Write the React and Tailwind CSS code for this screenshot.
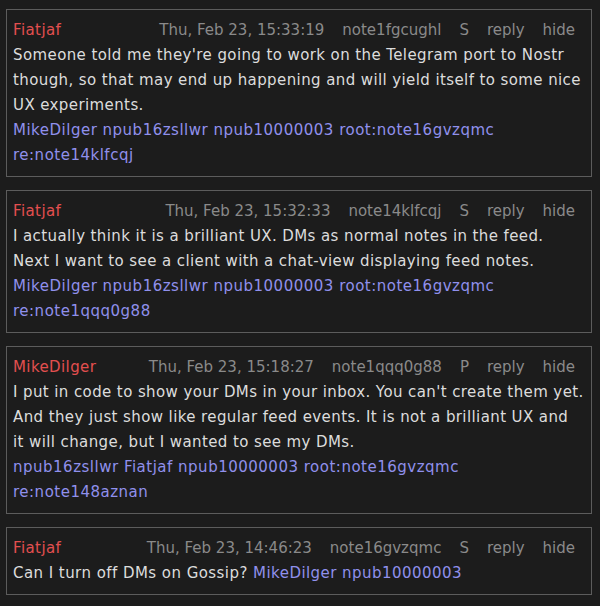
const FONT = { fontFamily: '"DejaVu Sans", "Liberation Sans", sans-serif' };

const notes = [
  {
    author: "Fiatjaf",
    when: "Thu, Feb 23, 15:33:19",
    id: "note1fgcughl",
    kind: "S",
    body: [
      "Someone told me they're going to work on the Telegram port to Nostr",
      "though, so that may end up happening and will yield itself to some nice",
      "UX experiments.",
    ],
    links: ["MikeDilger", "npub16zsllwr", "npub10000003", "root:note16gvzqmc", "re:note14klfcqj"],
  },
  {
    author: "Fiatjaf",
    when: "Thu, Feb 23, 15:32:33",
    id: "note14klfcqj",
    kind: "S",
    body: [
      "I actually think it is a brilliant UX. DMs as normal notes in the feed.",
      "Next I want to see a client with a chat-view displaying feed notes.",
    ],
    links: ["MikeDilger", "npub16zsllwr", "npub10000003", "root:note16gvzqmc", "re:note1qqq0g88"],
  },
  {
    author: "MikeDilger",
    when: "Thu, Feb 23, 15:18:27",
    id: "note1qqq0g88",
    kind: "P",
    body: [
      "I put in code to show your DMs in your inbox. You can't create them yet.",
      "And they just show like regular feed events. It is not a brilliant UX and",
      "it will change, but I wanted to see my DMs.",
    ],
    links: ["npub16zsllwr", "Fiatjaf", "npub10000003", "root:note16gvzqmc", "re:note148aznan"],
  },
  {
    author: "Fiatjaf",
    when: "Thu, Feb 23, 14:46:23",
    id: "note16gvzqmc",
    kind: "S",
    body: ["Can I turn off DMs on Gossip?"],
    links: ["MikeDilger", "npub10000003"],
    inline: true,
  },
];

function Note({ n }) {
  const linkRow = n.links.map((l, i) => (
    <span key={i} className="text-[#9090ec]">
      {l}
      {i < n.links.length - 1 ? " " : ""}
    </span>
  ));
  return (
    <div className="border border-[#5c5c5c] px-[6px] py-[8px] leading-[25px]">
      <div className="flex items-center">
        <span className="text-[#e24f4f] tracking-[0.4px]">{n.author}</span>
        <div className="ml-auto mr-[10px] flex gap-[18px] text-[#8a8a8a]">
          <span>{n.when}</span>
          <span>{n.id}</span>
          <span>{n.kind}</span>
          <span>reply</span>
          <span>hide</span>
        </div>
      </div>
      {n.inline ? (
        <div className="whitespace-nowrap text-[#dcdcdc] tracking-[0.45px]">
          {n.body[0]} {linkRow}
        </div>
      ) : (
        <>
          <div className="whitespace-nowrap text-[#dcdcdc] tracking-[0.4px]">
            {n.body.map((line, i) => (
              <div key={i}>{line}</div>
            ))}
          </div>
          <div className="tracking-[0.5px]">{linkRow}</div>
        </>
      )}
    </div>
  );
}

export default function App() {
  return (
    <div
      className="min-h-[606px] w-[600px] bg-[#1c1c1c] pl-[6px] pr-[8px] pt-[9px] text-[15px]"
      style={FONT}
    >
      <div className="flex flex-col gap-[13px]">
        {notes.map((n) => (
          <Note key={n.id} n={n} />
        ))}
      </div>
    </div>
  );
}
